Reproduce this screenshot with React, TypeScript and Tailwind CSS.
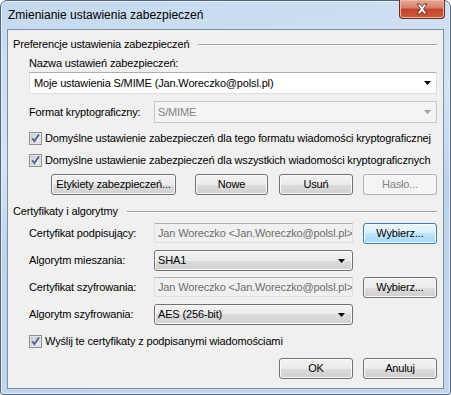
import React from "react";

const font = "font-['Liberation_Sans',Arial,sans-serif] text-[11px] leading-[15px] tracking-[-0.15px]";

const GroupLabel = ({ label }: { label: string }) => (
  <div className="flex items-center h-[15px] -ml-[16px] text-black">
    <span className="whitespace-nowrap">{label}</span>
    <div className="flex-1 ml-[9px] h-[2px] border-t border-[#a0a0a0] border-b border-b-white" />
  </div>
);

const Arrow = ({ disabled }: { disabled?: boolean }) => (
  <svg width="7" height="4" viewBox="0 0 7 4">
    <path d="M0 0h7L3.5 4z" fill={disabled ? "#a0a0a0" : "#000"} />
  </svg>
);

const Btn = ({ label, w, disabled, hot }: { label: string; w: string; disabled?: boolean; hot?: boolean }) => {
  const base = "h-full flex items-center justify-center rounded-[3px] border whitespace-nowrap";
  if (disabled)
    return <div className={`${base} ${w} border-[#adb2b5] bg-[#f4f4f4] text-[#838383]`}>{label}</div>;
  if (hot)
    return (
      <div
        className={`${base} ${w} border-[#3c7fb1] bg-[linear-gradient(180deg,#eaf6fd_0%,#d9f0fc_50%,#bee6fd_50%,#a7d9f5_100%)] shadow-[inset_0_0_0_1px_#f4fbfe] text-black`}
      >
        {label}
      </div>
    );
  return (
    <div
      className={`${base} ${w} border-[#707070] bg-[linear-gradient(180deg,#f2f2f2_0%,#ebebeb_50%,#dddddd_50%,#cfcfcf_100%)] shadow-[inset_0_0_0_1px_#fcfcfc] text-black`}
    >
      {label}
    </div>
  );
};

const Check = ({ label, className }: { label: string; className: string }) => (
  <div className={`flex items-center h-[16px] ${className}`}>
    <svg width="13" height="13" viewBox="0 0 13 13" className="shrink-0">
      <defs>
        <linearGradient id="cb" x1="0" y1="0" x2="1" y2="1">
          <stop offset="0" stopColor="#cbcfd5" />
          <stop offset="1" stopColor="#f6f6f6" />
        </linearGradient>
      </defs>
      <rect x="0.5" y="0.5" width="12" height="12" fill="#f4f4f4" stroke="#8e8f8f" />
      <rect x="2" y="2" width="9" height="9" fill="url(#cb)" stroke="#aeb3b9" strokeWidth="0.5" />
      <path d="M3.2 6.3 L5.4 9.3 L9.9 2.6" fill="none" stroke="#4a5f97" strokeWidth="1.8" />
    </svg>
    <span className="ml-[3px] whitespace-nowrap text-black">{label}</span>
  </div>
);

const TextBox = ({ value }: { value: string }) => (
  <div className="h-full w-[199px] shrink-0 flex items-center pl-[3px] border border-[#dbdfe6] border-t-[#abadb3] bg-[#f0f0f0] text-[#6d6d6d] overflow-hidden whitespace-nowrap">
    {value}
  </div>
);

const FieldLabel = ({ label }: { label: string }) => (
  <span className="w-[125px] shrink-0 whitespace-nowrap text-black">{label}</span>
);

const dropCls =
  "w-[199px] h-full flex items-center justify-between pl-[3px] pr-[7px] rounded-[3px] border border-[#707070] bg-[linear-gradient(180deg,#f2f2f2_0%,#ebebeb_50%,#dddddd_50%,#cfcfcf_100%)] shadow-[inset_0_0_0_1px_#fcfcfc] text-black";

export default function App() {
  return (
    <div className={`w-[451px] h-[395px] bg-white ${font}`}>
      <div className="w-full h-full flex flex-col rounded-t-[7px] rounded-b-[3px] border border-[#54657a] bg-[linear-gradient(170deg,#c4d9ef_0%,#d5e4f4_35%,#bcd3eb_55%,#c2d7ee_100%)] shadow-[inset_0_0_0_1px_#e6eff9]">
        {/* title bar */}
        <div className="h-[28px] flex items-start justify-between pl-[7px] pr-[5px]">
          <span className="mt-[7px] text-[#000] text-[12px] tracking-normal">Zmienianie ustawienia zabezpieczeń</span>
          <div className="w-[46px] h-[19px] -mt-[1px] flex items-center justify-center rounded-b-[4px] border border-[#6b2b20] border-t-0 bg-[linear-gradient(180deg,#e9a999_0%,#d47f6a_45%,#c4432a_50%,#cf5a38_100%)] shadow-[inset_0_0_0_1px_#eeb4a4]">
            <svg width="14" height="12" viewBox="0 0 14 12">
              <path d="M2 1h3l2 2.6L9 1h3L8.6 6 12 11H9L7 8.4 5 11H2l3.4-5z" fill="#fff" stroke="#5a2a22" strokeWidth="0.9" strokeLinejoin="round" />
            </svg>
          </div>
        </div>

        {/* client area */}
        <div className="mx-[6px] h-[360px] border border-[#7d8fa3] bg-[#f0f0f0] flex flex-col pl-[21px] pr-[6px]">
          <div className="mt-[7px]">
            <GroupLabel label="Preferencje ustawienia zabezpieczeń" />
          </div>
          <div className="mt-[4px] h-[15px] text-black whitespace-nowrap">Nazwa ustawień zabezpieczeń:</div>
          <div className="mt-[1px] h-[22px] flex items-center justify-between pl-[4px] pr-[5px] border border-[#dbdfe6] border-t-[#abadb3] bg-white text-black">
            <span className="whitespace-nowrap">Moje ustawienia S/MIME (Jan.Woreczko@polsl.pl)</span>
            <Arrow />
          </div>

          <div className="mt-[7px] h-[22px] flex items-center">
            <FieldLabel label="Format kryptograficzny:" />
            <div className="flex-1 h-full flex items-center justify-between pl-[3px] pr-[5px] border border-[#c5c9cc] bg-[#f4f4f4] text-[#838383]">
              <span>S/MIME</span>
              <Arrow disabled />
            </div>
          </div>

          <Check className="mt-[7px]" label="Domyślne ustawienie zabezpieczeń dla tego formatu wiadomości kryptograficznej" />
          <Check className="mt-[6px]" label="Domyślne ustawienie zabezpieczeń dla wszystkich wiadomości kryptograficznych" />

          <div className="mt-[6px] h-[21px] flex items-center">
            <div className="ml-[22px] h-full">
              <Btn label="Etykiety zabezpieczeń..." w="w-[125px]" />
            </div>
            <div className="ml-[19px] h-full">
              <Btn label="Nowe" w="w-[73px]" />
            </div>
            <div className="ml-[11px] h-full">
              <Btn label="Usuń" w="w-[74px]" />
            </div>
            <div className="ml-[10px] h-full">
              <Btn label="Hasło..." w="w-[74px]" disabled />
            </div>
          </div>

          <div className="mt-[9px]">
            <GroupLabel label="Certyfikaty i algorytmy" />
          </div>

          <div className="mt-[4px] h-[20px] flex items-center">
            <FieldLabel label="Certyfikat podpisujący:" />
            <TextBox value="Jan Woreczko <Jan.Woreczko@polsl.pl>" />
            <div className="ml-[10px] h-[21px]">
              <Btn label="Wybierz..." w="w-[74px]" hot />
            </div>
          </div>

          <div className="mt-[7px] h-[21px] flex items-center">
            <FieldLabel label="Algorytm mieszania:" />
            <div className={dropCls}>
              <span>SHA1</span>
              <Arrow />
            </div>
          </div>

          <div className="mt-[6px] h-[20px] flex items-center">
            <FieldLabel label="Certyfikat szyfrowania:" />
            <TextBox value="Jan Woreczko <Jan.Woreczko@polsl.pl>" />
            <div className="ml-[10px] h-[21px]">
              <Btn label="Wybierz..." w="w-[74px]" />
            </div>
          </div>

          <div className="mt-[7px] h-[21px] flex items-center">
            <FieldLabel label="Algorytm szyfrowania:" />
            <div className={dropCls}>
              <span>AES (256-bit)</span>
              <Arrow />
            </div>
          </div>

          <Check className="mt-[8px]" label="Wyślij te certyfikaty z podpisanymi wiadomościami" />

          <div className="mt-[9px] h-[21px] flex justify-end gap-[10px]">
            <Btn label="OK" w="w-[74px]" />
            <Btn label="Anuluj" w="w-[74px]" />
          </div>
        </div>
      </div>
    </div>
  );
}
